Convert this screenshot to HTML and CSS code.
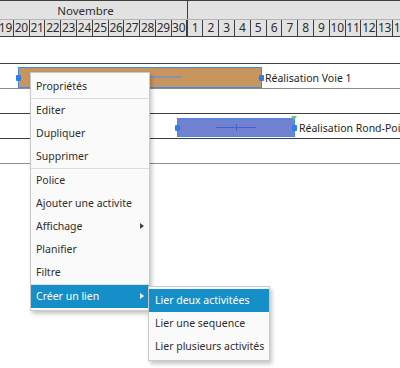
FILE: index.html
```html
<!DOCTYPE html>
<html lang="fr">
<head>
  <meta charset="UTF-8">
  <title>Planning</title>
  <link rel="stylesheet" href="styles.css">
</head>
<body>
  <div class="gantt">
    <div class="scale">
      <div class="months">
        <div class="month nov">Novembre</div>
        <div class="month dec"></div>
      </div>
      <div class="days">
        <span class="day">19</span><span class="day">20</span><span class="day">21</span><span class="day">22</span><span class="day">23</span><span class="day">24</span><span class="day">25</span><span class="day">26</span><span class="day">27</span><span class="day">28</span><span class="day">29</span><span class="day month-end">30</span><span class="day">1</span><span class="day">2</span><span class="day">3</span><span class="day">4</span><span class="day">5</span><span class="day">6</span><span class="day">7</span><span class="day">8</span><span class="day">9</span><span class="day">10</span><span class="day">11</span><span class="day">12</span><span class="day">13</span><span class="day">14</span>
      </div>
    </div>

    <div class="rows">
      <div class="row first"></div>
      <div class="row light"></div>
      <div class="row"></div>
      <div class="row"></div>
      <div class="row light"></div>
    </div>

    <div class="task task-voie">
      <div class="bar bar-orange">
        <span class="progress"></span>
      </div>
      <span class="label">Réalisation Voie 1</span>
    </div>

    <div class="task task-rond">
      <div class="bar bar-blue">
        <span class="link-line"></span>
        <span class="milestone"></span>
      </div>
      <span class="label">Réalisation Rond-Point</span>
    </div>
  </div>

  <ul class="menu main-menu">
    <li>Propriétés</li>
    <li class="sep"></li>
    <li>Editer</li>
    <li>Dupliquer</li>
    <li>Supprimer</li>
    <li class="sep"></li>
    <li>Police</li>
    <li>Ajouter une activite</li>
    <li class="has-sub">Affichage</li>
    <li>Planifier</li>
    <li>Filtre</li>
    <li class="sep"></li>
    <li class="has-sub active">Créer un lien</li>
  </ul>

  <ul class="menu sub-menu">
    <li class="active">Lier deux activitées</li>
    <li>Lier une sequence</li>
    <li>Lier plusieurs activités</li>
  </ul>
</body>
</html>
```

FILE: styles.css
```css
:root {
  --text: #2e2e2e;
  --header: #e2e2e2;
  --line-dark: #3f3f3f;
  --line-light: #8c8c8c;
  --select: #3d8de6;
  --accent: #168fc9;
  --menu-bg: #fafafa;
  --menu-border: #c9c9c9;
}

body {
  margin: 0;
  width: 400px;
  height: 368px;
  overflow: hidden;
  position: relative;
  background: #fff;
  color: var(--text);
  font-family: 'Noto Sans', 'Liberation Sans', sans-serif;
  font-size: 11px;
}

.gantt {
  position: relative;
  width: 400px;
  height: 368px;
  overflow: hidden;
}

/* Time scale */
.scale {
  background: var(--header);
  border-top: 1px solid var(--line-dark);
}

.months {
  display: flex;
  height: 19px;
  margin-left: -2px;
  border-bottom: 1px solid #b4b4b4;
  box-sizing: border-box;
}

.month {
  box-sizing: border-box;
  display: flex;
  align-items: center;
  justify-content: center;
  font-size: 11.5px;
}

.month.nov {
  width: 190px;
  padding-right: 14px;
  border-right: 1px solid var(--line-dark);
}

.month.dec {
  flex: 1;
}

.days {
  display: flex;
  height: 17px;
  margin-left: -2px;
  border-bottom: 1px solid var(--line-dark);
  box-sizing: border-box;
}

.day {
  flex: 0 0 15.8px;
  box-sizing: border-box;
  border-right: 1px solid var(--line-dark);
  text-align: center;
  font-size: 12px;
  line-height: 16px;
  letter-spacing: -0.3px;
}

.day.month-end {
  border-right-width: 2px;
}

/* Rows */
.row {
  height: 25px;
  box-sizing: border-box;
  border-bottom: 1px solid var(--line-dark);
}

.row.first {
  height: 27px;
}

.row.light {
  border-bottom-color: var(--line-light);
}

/* Tasks */
.task {
  position: absolute;
  display: flex;
  align-items: center;
  gap: 3px;
}

.task-voie {
  left: 18px;
  top: 67px;
}

.task-rond {
  left: 177px;
  top: 118px;
  gap: 4px;
}

.bar {
  position: relative;
  box-sizing: border-box;
  border: 1px solid var(--select);
}

.bar::before,
.bar::after {
  content: '';
  position: absolute;
  top: 50%;
  width: 5px;
  height: 6px;
  margin-top: -3px;
  background: #2c7fe3;
  border-radius: 1px;
}

.bar::before { left: -3px; }
.bar::after { right: -3px; }

.bar-orange {
  width: 244px;
  height: 21px;
  background: #c9955f;
}

.bar-blue {
  width: 118px;
  height: 19px;
  background: #7181cf;
}

.progress {
  position: absolute;
  left: 60px;
  top: 8px;
  width: 102px;
  height: 2px;
  background: #8693ad;
}

.link-line {
  position: absolute;
  left: 38px;
  top: 8px;
  width: 40px;
  height: 1px;
  background: #3e63d6;
}

.link-line::after {
  content: '';
  position: absolute;
  left: 20px;
  top: -3px;
  width: 1px;
  height: 7px;
  background: #3e63d6;
}

.milestone {
  position: absolute;
  right: -3px;
  top: -3px;
  border-left: 3px solid transparent;
  border-right: 3px solid transparent;
  border-top: 4px solid #6cc46c;
}

.label {
  white-space: nowrap;
  font-size: 10.5px;
  color: #1e1e1e;
}

/* Context menus */
.menu {
  position: absolute;
  margin: 0;
  padding: 2px 0;
  list-style: none;
  background: var(--menu-bg);
  border: 1px solid var(--menu-border);
  box-shadow: 2px 3px 4px rgba(0, 0, 0, 0.22);
}

.main-menu {
  left: 30px;
  top: 72px;
  width: 118px;
}

.sub-menu {
  left: 148px;
  top: 286px;
  width: 120px;
}

.menu li {
  position: relative;
  height: 23px;
  line-height: 23px;
  padding-left: 5px;
  white-space: nowrap;
  font-size: 10.5px;
  color: var(--text);
}

.sub-menu li {
  padding-left: 6px;
}

.menu li.sep {
  height: 1px;
  background: #dcdcdc;
}

.menu li.active {
  background: var(--accent);
  color: #fff;
}

.menu li.has-sub::after {
  content: '';
  position: absolute;
  right: 5px;
  top: 8px;
  border-top: 3.5px solid transparent;
  border-bottom: 3.5px solid transparent;
  border-left: 4px solid #444;
}

.menu li.has-sub.active::after {
  border-left-color: #fff;
}
```
